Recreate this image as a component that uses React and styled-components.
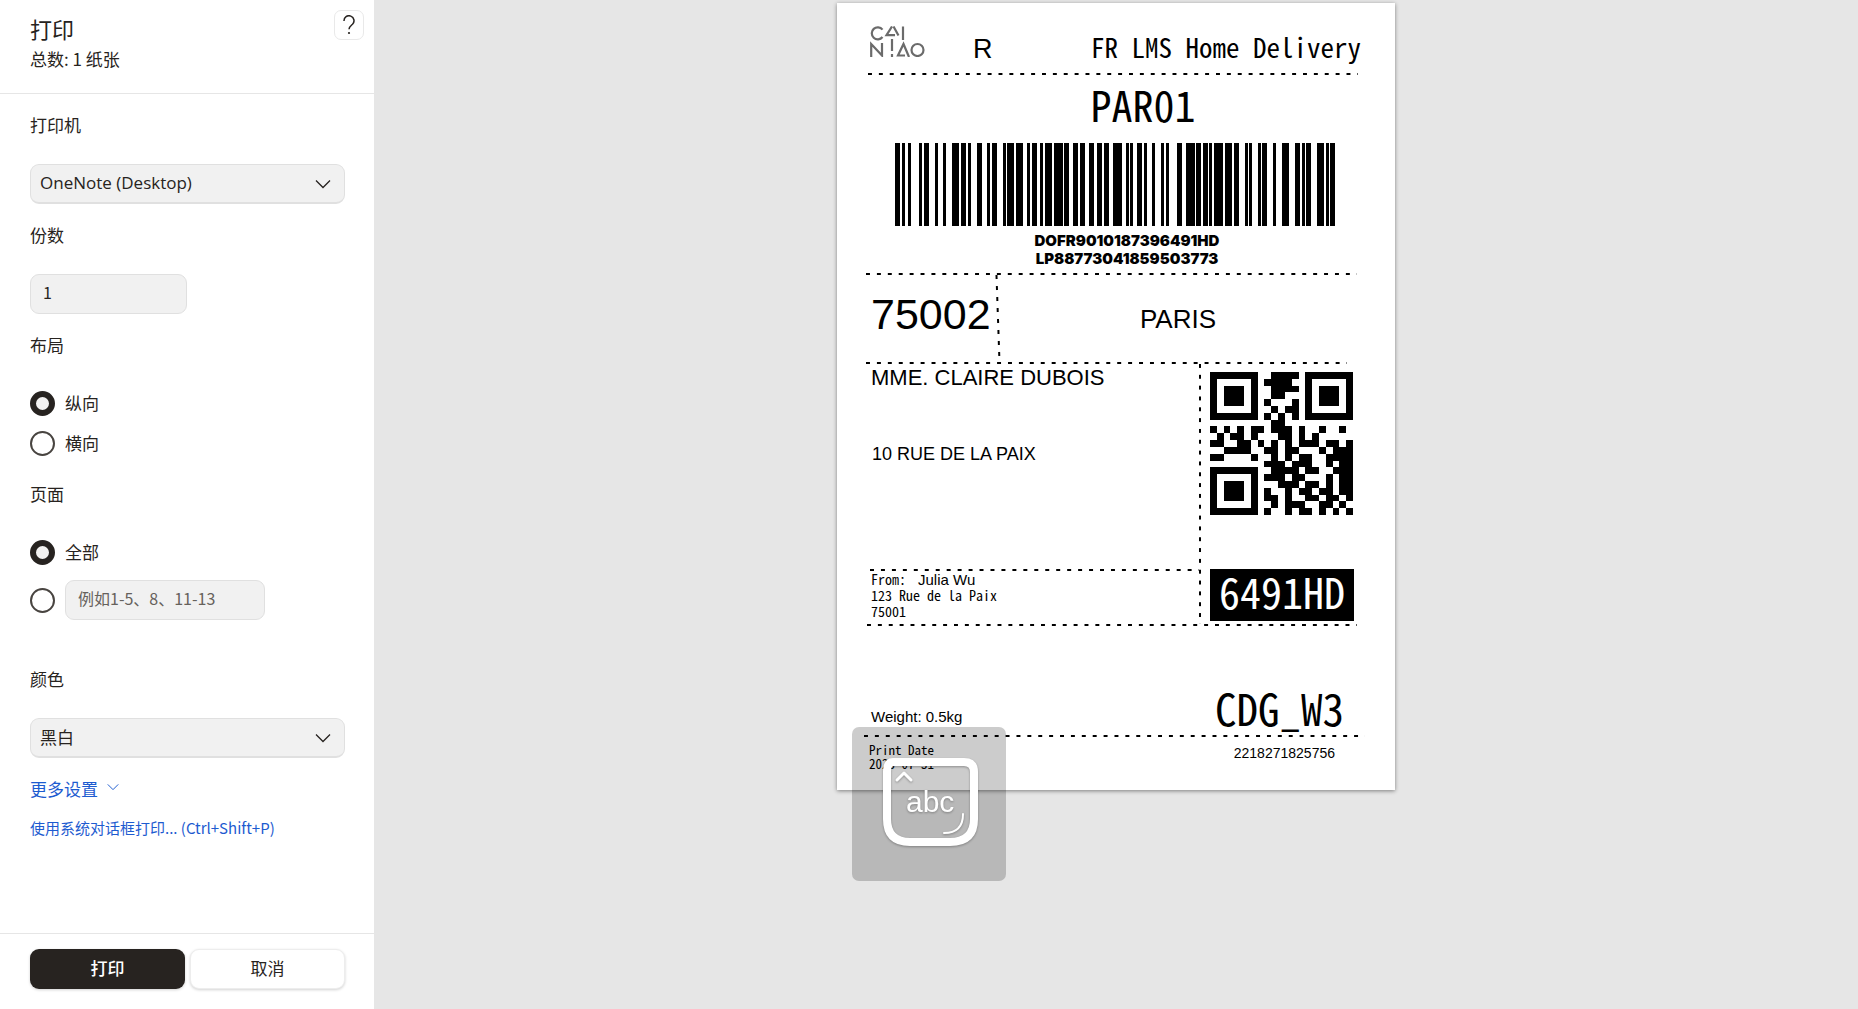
import React, { useState } from "react";
import styled, { createGlobalStyle } from "styled-components";

const GlobalStyle = createGlobalStyle`
  *, *::before, *::after { box-sizing: border-box; }
  body { margin: 0; background: #e6e6e6; }
  body, button, input, select {
    font-family: "Noto Sans CJK SC", "Noto Sans", sans-serif;
    color: #272320;
  }
`;

const arial = `"Liberation Sans", Arial, sans-serif`;
const mono = `"Noto Sans Mono CJK SC", "DejaVu Sans Mono", monospace`;

const Page = styled.div`
  display: flex;
  height: 100vh;
  overflow: hidden;
`;

const Sidebar = styled.aside`
  flex: 0 0 374px;
  display: flex;
  flex-direction: column;
  background: #fff;
`;

const SidebarHeader = styled.header`
  display: flex;
  justify-content: space-between;
  align-items: flex-start;
  height: 94px;
  padding: 10px 10px 0 30px;
  border-bottom: 1px solid #e6e6e6;
`;

const Title = styled.h1`
  margin: 4px 0 0;
  font-size: 22px;
  line-height: 28px;
  font-weight: 400;
`;

const Total = styled.p`
  margin: 5px 0 0;
  font-size: 17px;
  line-height: 24px;
`;

const HelpButton = styled.button`
  display: grid;
  place-items: center;
  width: 30px;
  height: 30px;
  padding: 0;
  border: 1px solid #e9e9e9;
  border-radius: 7px;
  background: #fff;
`;

const Form = styled.form`
  flex: 1;
  min-height: 0;
  display: flex;
  flex-direction: column;
  gap: 20px;
  padding: 20px 29px 0 30px;
  overflow: hidden;
`;

const Section = styled.section`
  display: flex;
  flex-direction: column;
  margin-top: ${(p) => (p.$spaced ? "28px" : "0")};
`;

const Caption = styled.label`
  margin-bottom: 28px;
  font-size: 17px;
  line-height: 22px;
`;

const SelectBox = styled.div`
  display: grid;
  grid-template-columns: 1fr 44px;
  align-items: center;

  svg {
    grid-area: 1 / 2;
    justify-self: center;
    pointer-events: none;
  }
`;

const Select = styled.select`
  grid-area: 1 / 1 / 2 / 3;
  appearance: none;
  height: 40px;
  padding: 0 44px 3px 9px;
  border: 1px solid #e0e0e0;
  border-bottom-width: 2px;
  border-radius: 9px;
  background: #f1f1f1;
  font-size: 17px;
  ${(p) => p.$latin && `font-family: "Open Sans", "Noto Sans CJK SC", sans-serif;`}
`;

const TextBox = styled.input`
  width: ${(p) => p.$width};
  height: 40px;
  padding: 0 12px 4px;
  border: 1px solid #e0e0e0;
  border-radius: 9px;
  background: #f1f1f1;
  font-size: 16px;
  &::placeholder { color: #66615c; opacity: 1; }
`;

const RadioRow = styled.div`
  display: flex;
  align-items: center;
  gap: 10px;
  height: 40px;
  margin-top: ${(p) => (p.$spaced ? "8px" : "0")};
  font-size: 17px;

  label { padding-bottom: 2px; }
`;

const RadioRows = styled.div`
  margin-top: -1px;
`;

const Radio = styled.input`
  appearance: none;
  width: 25px;
  height: 25px;
  margin: 0;
  border: 2px solid #484440;
  border-radius: 50%;
  background: #fff;
  &:checked {
    border: 6px solid #272320;
    background: #f3f2f1;
  }
`;

const MoreButton = styled.button`
  display: flex;
  align-items: center;
  align-self: flex-start;
  gap: 9px;
  padding: 0;
  border: 0;
  background: none;
  font-size: 17px;
  line-height: 22px;
  color: #1d5bd0;

  svg { margin-bottom: 4px; }
`;

const SystemLink = styled.a`
  align-self: flex-start;
  margin-top: -1px;
  font-size: 15px;
  line-height: 18px;
  color: #1d5bd0;
  text-decoration: none;
`;

const Footer = styled.footer`
  display: grid;
  grid-template-columns: 1fr 1fr;
  gap: 5px;
  padding: 15px 29px 20px 30px;
  border-top: 1px solid #e6e6e6;
`;

const ActionButton = styled.button`
  height: 40px;
  padding: 0 0 4px;
  border: ${(p) => (p.$primary ? "0" : "1px solid #ededed")};
  border-radius: 9px;
  background: ${(p) => (p.$primary ? "#272320" : "#fff")};
  color: ${(p) => (p.$primary ? "#fff" : "#272320")};
  box-shadow: 0 1px 3px rgba(0, 0, 0, 0.18);
  font-size: 17px;
  font-weight: ${(p) => (p.$primary ? "500" : "400")};
`;

const Preview = styled.main`
  flex: 1;
  display: flex;
  justify-content: center;
  align-items: flex-start;
  padding-top: 3px;
  background: #e6e6e6;
`;

const Sheet = styled.article`
  position: relative;
  flex: 0 0 558px;
  padding-bottom: 19px;
  background: #fff;
  box-shadow: 0 1px 4px rgba(0, 0, 0, 0.45);
  color: #000;
  font-family: ${arial};
`;

const Rule = styled.div`
  height: 2px;
  margin-left: ${(p) => p.$left}px;
  margin-right: ${(p) => p.$right}px;
  background: linear-gradient(90deg, #000 36%, transparent 36%) 0 0 / 11px 2px round;
`;

const VerticalRule = styled.div`
  width: 2px;
  background: linear-gradient(180deg, #000 36%, transparent 36%) 0 0 / 2px 11px round;
  transform: ${(p) => (p.$skewed ? "rotate(-2deg)" : "none")};
`;

const LabelHeader = styled.header`
  display: flex;
  align-items: flex-start;
  height: 70px;
  padding: 23px 34px 0 33px;
`;

const Grade = styled.span`
  margin: 7px auto 0 48px;
  font-size: 27px;
  line-height: 32px;
`;

const Service = styled.span`
  margin-top: 3px;
  font-family: ${mono};
  font-size: 27px;
  line-height: 36px;
`;

const Hub = styled.div`
  margin-top: 3px;
  padding-left: 54px;
  text-align: center;
  font-family: ${mono};
  font-size: 42px;
  line-height: 52px;
`;

const Barcode = styled.svg`
  display: block;
  width: 440px;
  height: 83px;
  margin: 13px auto 6px 58px;
`;

const Tracking = styled.div`
  padding-left: 22px;
  margin-bottom: 5px;
  text-align: center;
  font-family: Inter, ${arial};
  font-weight: 900;
  font-size: 15px;
  line-height: 18px;
`;

const CityRow = styled.div`
  display: grid;
  grid-template-columns: 126px 2px 1fr;
  height: 87px;
  padding: 0 38px 0 34px;
`;

const PostCode = styled.div`
  font-size: 43px;
  line-height: 78px;
`;

const City = styled.div`
  text-align: center;
  font-size: 26px;
  line-height: 88px;
`;

const Body = styled.div`
  display: grid;
  grid-template-columns: 333px 2px 143px;
  height: 260px;
  padding-left: 29px;
`;

const Recipient = styled.div`
  display: flex;
  flex-direction: column;
`;

const Name = styled.div`
  padding: 1px 0 0 5px;
  font-size: 22px;
  line-height: 26px;
`;

const Street = styled.div`
  flex: 1;
  padding: 53px 0 0 6px;
  font-size: 18px;
  line-height: 20px;
`;

const Sender = styled.address`
  height: 53px;
  padding-left: 5px;
  font-family: ${mono};
  font-style: normal;
  font-size: 14px;
  line-height: 16px;
`;

const SenderLine = styled.div`
  display: flex;
  height: 16px;
`;

const SenderName = styled.span`
  margin-left: 12px;
  font-family: ${arial};
  font-size: 15px;
  line-height: 18px;
`;

const Codes = styled.div`
  display: flex;
  flex-direction: column;
  justify-content: space-between;
  padding: 8px 0 3px;
  margin-left: 9px;
  width: 144px;
`;

const ShortCode = styled.div`
  height: 52px;
  background: #000;
  color: #fff;
  text-align: center;
  font-family: ${mono};
  font-size: 42px;
  line-height: 44px;
`;

const WeightRow = styled.div`
  display: flex;
  justify-content: space-between;
  align-items: flex-end;
  height: 109px;
  padding: 0 51px 0 34px;
`;

const Weight = styled.span`
  font-size: 15px;
  line-height: 18px;
  padding-bottom: 9px;
`;

const Sort = styled.span`
  padding-bottom: 2px;
  font-family: ${mono};
  font-size: 43px;
  line-height: 52px;
`;

const PrintRow = styled.div`
  display: flex;
  justify-content: space-between;
  padding: 6px 60px 0 32px;
`;

const PrintDate = styled.span`
  font-family: ${mono};
  font-size: 13px;
  line-height: 14px;
`;

const Serial = styled.span`
  font-size: 14px;
  line-height: 20px;
`;

const ImeBadge = styled.div`
  position: absolute;
  left: 15px;
  top: 724px;
  width: 154px;
  height: 154px;
  border-radius: 7px;
  background: rgba(0, 0, 0, 0.2);

  g { filter: drop-shadow(0 1px 1px rgba(0, 0, 0, 0.3)); }
  text { font-family: ${arial}; font-size: 30px; }
`;

const BARS = [
  [0, 5], [7, 3], [13, 3], [24, 3], [29, 5], [40, 3], [48, 3], [57, 7], [66, 5], [73, 3],
  [82, 5], [92, 3], [97, 5], [108, 3], [112, 7], [121, 7], [132, 3], [137, 5], [145, 3],
  [150, 7], [159, 9], [169, 5], [178, 5], [185, 5], [194, 5], [202, 5], [209, 5], [218, 9],
  [231, 3], [235, 3], [242, 5], [249, 3], [257, 3], [266, 3], [271, 3], [282, 5], [291, 9],
  [301, 5], [308, 5], [314, 3], [319, 9], [330, 7], [339, 5], [350, 3], [354, 3], [363, 3],
  [367, 5], [378, 3], [387, 7], [400, 5], [407, 3], [411, 5], [422, 7], [431, 3], [435, 5],
];

const QR = [
  "#######..####.#######",
  "#.....#.####..#.....#",
  "#.###.#..####.#.###.#",
  "#.###.#..##...#.###.#",
  "#.###.#.#...#.#.###.#",
  "#.....#..#.##.#.....#",
  "#######.#.#.#.#######",
  ".........##..........",
  "#.#.#.##.###.#..#..#.",
  ".#.##.#...##.#.#.....",
  "##..##.#.#.#.###.##.#",
  "..####..##.##...#.###",
  "##....#..#.#.##..####",
  "........###.###..#.##",
  "#######..####.##..###",
  "#.....#.###.##...#.##",
  "#.###.#...###.##.#.##",
  "#.###.#.#..#.##.##.##",
  "#.###.#.##.#..##.##.#",
  "#.....#..#.###..##.#.",
  "#######.#..#.##.#.#.#",
];

function Chevron({ width = 16, color = "#272320" }) {
  return (
    <svg width={width} height={width / 2 + 2} viewBox="0 0 16 10" fill="none" stroke={color} strokeWidth="1.3">
      <path d="M1 1.5 8 8.5 15 1.5" />
    </svg>
  );
}

function CainiaoLogo() {
  return (
    <svg width="55" height="31" viewBox="0 0 55 31" fill="none" stroke="#6b6b6b" strokeWidth="2.2">
      <path d="M12.5 3.6A6 6 0 1 0 12.5 11" />
      <path d="M22 .5 16.5 9.2H25M23.5 .5 28.5 9.5M33 .5V14" />
      <path d="M1.2 31V18L12 29.5V17M22 13V25M22 28V31" />
      <path d="M39 31 33.5 18 28 29.5H35" />
      <circle cx="47.5" cy="24" r="6" />
    </svg>
  );
}

function RadioOption({ id, name, label, checked, onChange }) {
  return (
    <RadioRow>
      <Radio type="radio" id={id} name={name} checked={checked} onChange={onChange} />
      <label htmlFor={id}>{label}</label>
    </RadioRow>
  );
}

export default function App() {
  const [layout, setLayout] = useState("portrait");
  const [pages, setPages] = useState("all");
  const [copies, setCopies] = useState("1");

  return (
    <Page>
      <GlobalStyle />
      <Sidebar>
        <SidebarHeader>
          <div>
            <Title>打印</Title>
            <Total>总数: 1 纸张</Total>
          </div>
          <HelpButton type="button" aria-label="帮助">
            <svg width="12" height="20" viewBox="0 0 12 20" fill="none" stroke="#272320" strokeWidth="1.5">
              <path d="M1 6A5 5 0 1 1 9.5 9.3C7.5 11 6 11.8 6 14.3" />
              <circle cx="6" cy="18" r="1.1" fill="#272320" stroke="none" />
            </svg>
          </HelpButton>
        </SidebarHeader>

        <Form id="print-form" onSubmit={(e) => e.preventDefault()}>
          <Section>
            <Caption htmlFor="printer">打印机</Caption>
            <SelectBox>
              <Select id="printer" $latin>
                <option>OneNote (Desktop)</option>
              </Select>
              <Chevron />
            </SelectBox>
          </Section>
          <Section>
            <Caption htmlFor="copies">份数</Caption>
            <TextBox id="copies" $width="157px" value={copies} onChange={(e) => setCopies(e.target.value)} />
          </Section>
          <Section role="radiogroup" aria-labelledby="layout-caption">
            <Caption as="div" id="layout-caption">布局</Caption>
            <RadioRows>
              <RadioOption id="portrait" name="layout" label="纵向" checked={layout === "portrait"} onChange={() => setLayout("portrait")} />
              <RadioOption id="landscape" name="layout" label="横向" checked={layout === "landscape"} onChange={() => setLayout("landscape")} />
            </RadioRows>
          </Section>
          <Section role="radiogroup" aria-labelledby="pages-caption">
            <Caption as="div" id="pages-caption">页面</Caption>
            <RadioRows>
              <RadioOption id="all" name="pages" label="全部" checked={pages === "all"} onChange={() => setPages("all")} />
              <RadioRow $spaced>
                <Radio type="radio" name="pages" aria-label="页面范围" checked={pages === "range"} onChange={() => setPages("range")} />
                <TextBox $width="200px" aria-label="页面范围" placeholder="例如1-5、8、11-13" />
              </RadioRow>
            </RadioRows>
          </Section>
          <Section $spaced>
            <Caption htmlFor="color">颜色</Caption>
            <SelectBox>
              <Select id="color">
                <option>黑白</option>
              </Select>
              <Chevron />
            </SelectBox>
          </Section>
          <MoreButton type="button">
            更多设置
            <Chevron width={12} color="#1d5bd0" />
          </MoreButton>
          <SystemLink href="#system">使用系统对话框打印... (Ctrl+Shift+P)</SystemLink>
        </Form>

        <Footer>
          <ActionButton $primary type="submit" form="print-form">打印</ActionButton>
          <ActionButton type="button">取消</ActionButton>
        </Footer>
      </Sidebar>

      <Preview>
        <Sheet>
          <LabelHeader>
            <CainiaoLogo />
            <Grade>R</Grade>
            <Service>FR LMS Home Delivery</Service>
          </LabelHeader>
          <Rule $left={31} $right={37} />
          <Hub>PAR01</Hub>
          <Barcode viewBox="0 0 440 83" shapeRendering="crispEdges">
            {BARS.map(([x, w]) => (
              <rect key={x} x={x} width={w} height="83" />
            ))}
          </Barcode>
          <Tracking>
            <div>DOFR9010187396491HD</div>
            <div>LP88773041859503773</div>
          </Tracking>
          <Rule $left={29} $right={38} />
          <CityRow>
            <PostCode>75002</PostCode>
            <VerticalRule $skewed />
            <City>PARIS</City>
          </CityRow>
          <Rule $left={29} $right={48} />
          <Body>
            <Recipient>
              <Name>MME. CLAIRE DUBOIS</Name>
              <Street>10 RUE DE LA PAIX</Street>
              <Rule $left={4} $right={0} />
              <Sender>
                <SenderLine>From:<SenderName>Julia Wu</SenderName></SenderLine>
                <SenderLine>123 Rue de la Paix</SenderLine>
                <SenderLine>75001</SenderLine>
              </Sender>
            </Recipient>
            <VerticalRule />
            <Codes>
              <svg width="143" height="143" viewBox="0 0 21 21" shapeRendering="crispEdges">
                {QR.flatMap((row, y) =>
                  [...row].map((cell, x) =>
                    cell === "#" ? <rect key={`${x}-${y}`} x={x} y={y} width="1" height="1" /> : null
                  )
                )}
              </svg>
              <ShortCode>6491HD</ShortCode>
            </Codes>
          </Body>
          <Rule $left={30} $right={38} />
          <WeightRow>
            <Weight>Weight: 0.5kg</Weight>
            <Sort>CDG_W3</Sort>
          </WeightRow>
          <Rule $left={27} $right={30} />
          <PrintRow>
            <PrintDate>
              <div>Print Date</div>
              <div>2023-07-31</div>
            </PrintDate>
            <Serial>2218271825756</Serial>
          </PrintRow>
          <ImeBadge>
            <svg width="154" height="154" viewBox="0 0 154 154" fill="none" stroke="#fff">
              <g>
                <path strokeWidth="8" d="M41 35H112Q122 35 122 45V92Q122 115 98 115H58Q35 115 35 92V45Q35 35 41 35Z" />
                <path strokeWidth="3" strokeLinecap="round" strokeLinejoin="round" d="M45 53 52 46 59 53" />
                <path strokeWidth="2" strokeLinecap="round" d="M111 87Q111 106 92 106" />
                <text x="54" y="85" fill="#fff" stroke="none">abc</text>
              </g>
            </svg>
          </ImeBadge>
        </Sheet>
      </Preview>
    </Page>
  );
}
